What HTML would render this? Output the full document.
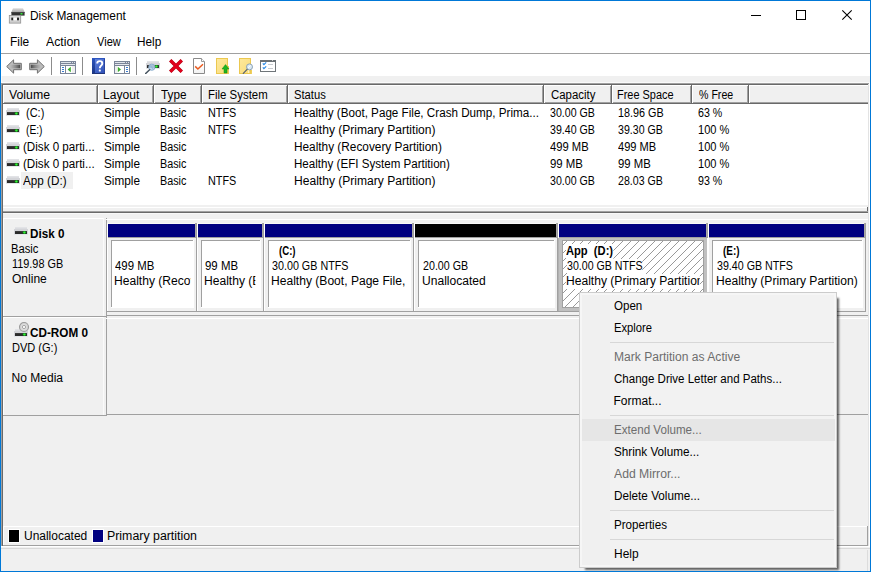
<!DOCTYPE html>
<html lang="en"><head><meta charset="utf-8"><title>Disk Management</title>
<style>
html,body{margin:0;padding:0}
body{width:871px;height:572px;position:relative;overflow:hidden;background:#fff;font:12px/14px 'Liberation Sans', sans-serif;color:#000}
#w{position:absolute;left:0;top:0;width:869px;height:570px;border:1px solid #0078d7;overflow:hidden}
#w>*{position:absolute;margin-left:-1px;margin-top:-1px}
#w svg svg, #w div svg{position:absolute}
.t{white-space:pre;height:14px;transform-origin:0 50%;display:block}
</style></head>
<body><div id="w">
<div style="left:1px;top:53px;width:869px;height:1px;background:#a0a0a0;"></div>
<div style="left:1px;top:76px;width:869px;height:7px;background:#f0f0f0;"></div>
<div style="left:1px;top:82px;width:869px;height:1px;background:#fafafa;"></div>
<div style="left:1px;top:76px;width:1px;height:7px;background:#fafafa;"></div>
<div style="left:1px;top:83px;width:868px;height:1px;background:#a0a0a0;"></div>
<div style="left:1px;top:83px;width:1px;height:463px;background:#a0a0a0;"></div>
<div style="left:2px;top:84px;width:866px;height:1px;background:#696969;"></div>
<div style="left:2px;top:84px;width:1px;height:462px;background:#696969;"></div>
<div style="left:869px;top:83px;width:1px;height:464px;background:#fff;"></div>
<div style="left:868px;top:84px;width:1px;height:462px;background:#e3e3e3;"></div>
<div style="left:3px;top:205px;width:865px;height:2px;background:#f0f0f0;"></div>
<div style="left:3px;top:85px;width:865px;height:19px;background:#f0f0f0;"></div>
<div style="left:3px;top:85px;width:95px;height:1px;background:#fff;"></div>
<div style="left:3px;top:85px;width:1px;height:18px;background:#fff;"></div>
<div style="left:3px;top:103px;width:95px;height:1px;background:#696969;"></div>
<div style="left:4px;top:102px;width:94px;height:1px;background:#a0a0a0;"></div>
<div style="left:97px;top:85px;width:1px;height:19px;background:#696969;"></div>
<div style="left:96px;top:86px;width:1px;height:17px;background:#a0a0a0;"></div>
<div style="left:98px;top:85px;width:56px;height:1px;background:#fff;"></div>
<div style="left:98px;top:85px;width:1px;height:18px;background:#fff;"></div>
<div style="left:98px;top:103px;width:56px;height:1px;background:#696969;"></div>
<div style="left:99px;top:102px;width:55px;height:1px;background:#a0a0a0;"></div>
<div style="left:153px;top:85px;width:1px;height:19px;background:#696969;"></div>
<div style="left:152px;top:86px;width:1px;height:17px;background:#a0a0a0;"></div>
<div style="left:154px;top:85px;width:48px;height:1px;background:#fff;"></div>
<div style="left:154px;top:85px;width:1px;height:18px;background:#fff;"></div>
<div style="left:154px;top:103px;width:48px;height:1px;background:#696969;"></div>
<div style="left:155px;top:102px;width:47px;height:1px;background:#a0a0a0;"></div>
<div style="left:201px;top:85px;width:1px;height:19px;background:#696969;"></div>
<div style="left:200px;top:86px;width:1px;height:17px;background:#a0a0a0;"></div>
<div style="left:202px;top:85px;width:86px;height:1px;background:#fff;"></div>
<div style="left:202px;top:85px;width:1px;height:18px;background:#fff;"></div>
<div style="left:202px;top:103px;width:86px;height:1px;background:#696969;"></div>
<div style="left:203px;top:102px;width:85px;height:1px;background:#a0a0a0;"></div>
<div style="left:287px;top:85px;width:1px;height:19px;background:#696969;"></div>
<div style="left:286px;top:86px;width:1px;height:17px;background:#a0a0a0;"></div>
<div style="left:288px;top:85px;width:256px;height:1px;background:#fff;"></div>
<div style="left:288px;top:85px;width:1px;height:18px;background:#fff;"></div>
<div style="left:288px;top:103px;width:256px;height:1px;background:#696969;"></div>
<div style="left:289px;top:102px;width:255px;height:1px;background:#a0a0a0;"></div>
<div style="left:543px;top:85px;width:1px;height:19px;background:#696969;"></div>
<div style="left:542px;top:86px;width:1px;height:17px;background:#a0a0a0;"></div>
<div style="left:544px;top:85px;width:68px;height:1px;background:#fff;"></div>
<div style="left:544px;top:85px;width:1px;height:18px;background:#fff;"></div>
<div style="left:544px;top:103px;width:68px;height:1px;background:#696969;"></div>
<div style="left:545px;top:102px;width:67px;height:1px;background:#a0a0a0;"></div>
<div style="left:611px;top:85px;width:1px;height:19px;background:#696969;"></div>
<div style="left:610px;top:86px;width:1px;height:17px;background:#a0a0a0;"></div>
<div style="left:612px;top:85px;width:80px;height:1px;background:#fff;"></div>
<div style="left:612px;top:85px;width:1px;height:18px;background:#fff;"></div>
<div style="left:612px;top:103px;width:80px;height:1px;background:#696969;"></div>
<div style="left:613px;top:102px;width:79px;height:1px;background:#a0a0a0;"></div>
<div style="left:691px;top:85px;width:1px;height:19px;background:#696969;"></div>
<div style="left:690px;top:86px;width:1px;height:17px;background:#a0a0a0;"></div>
<div style="left:692px;top:85px;width:57px;height:1px;background:#fff;"></div>
<div style="left:692px;top:85px;width:1px;height:18px;background:#fff;"></div>
<div style="left:692px;top:103px;width:57px;height:1px;background:#696969;"></div>
<div style="left:693px;top:102px;width:56px;height:1px;background:#a0a0a0;"></div>
<div style="left:748px;top:85px;width:1px;height:19px;background:#696969;"></div>
<div style="left:747px;top:86px;width:1px;height:17px;background:#a0a0a0;"></div>
<div style="left:749px;top:85px;width:119px;height:1px;background:#fff;"></div>
<div style="left:749px;top:85px;width:1px;height:18px;background:#fff;"></div>
<div style="left:749px;top:103px;width:119px;height:1px;background:#696969;"></div>
<div style="left:750px;top:102px;width:118px;height:1px;background:#a0a0a0;"></div>
<div style="left:21px;top:172px;width:52px;height:17px;background:#f0f0f0;"></div>
<svg style="left:6px;top:108px" width="14" height="8" viewBox="0 0 14 8"><path d="M1 0 H13 V2 H14 V8 H0 V2 H1 Z" fill="#d3d4d8"/><path d="M1 0 H13 V1 H1 Z" fill="#e2e3e6"/><path d="M1 1 H13 V2 H1 Z" fill="#dbdce0"/><rect x="1" y="4" width="12" height="3" fill="#2b2b2b"/><rect x="1" y="4" width="12" height="1" fill="#3a3a3a"/><rect x="8.6" y="4.2" width="3.6" height="2.6" rx="1" fill="#0f7a12"/><rect x="9.2" y="4.6" width="2.4" height="1.8" rx="0.8" fill="#35f03a"/><rect x="0" y="7" width="14" height="1" fill="#e4e6ea"/></svg>
<svg style="left:6px;top:125px" width="14" height="8" viewBox="0 0 14 8"><path d="M1 0 H13 V2 H14 V8 H0 V2 H1 Z" fill="#d3d4d8"/><path d="M1 0 H13 V1 H1 Z" fill="#e2e3e6"/><path d="M1 1 H13 V2 H1 Z" fill="#dbdce0"/><rect x="1" y="4" width="12" height="3" fill="#2b2b2b"/><rect x="1" y="4" width="12" height="1" fill="#3a3a3a"/><rect x="8.6" y="4.2" width="3.6" height="2.6" rx="1" fill="#0f7a12"/><rect x="9.2" y="4.6" width="2.4" height="1.8" rx="0.8" fill="#35f03a"/><rect x="0" y="7" width="14" height="1" fill="#e4e6ea"/></svg>
<svg style="left:6px;top:142px" width="14" height="8" viewBox="0 0 14 8"><path d="M1 0 H13 V2 H14 V8 H0 V2 H1 Z" fill="#d3d4d8"/><path d="M1 0 H13 V1 H1 Z" fill="#e2e3e6"/><path d="M1 1 H13 V2 H1 Z" fill="#dbdce0"/><rect x="1" y="4" width="12" height="3" fill="#2b2b2b"/><rect x="1" y="4" width="12" height="1" fill="#3a3a3a"/><rect x="8.6" y="4.2" width="3.6" height="2.6" rx="1" fill="#0f7a12"/><rect x="9.2" y="4.6" width="2.4" height="1.8" rx="0.8" fill="#35f03a"/><rect x="0" y="7" width="14" height="1" fill="#e4e6ea"/></svg>
<svg style="left:6px;top:159px" width="14" height="8" viewBox="0 0 14 8"><path d="M1 0 H13 V2 H14 V8 H0 V2 H1 Z" fill="#d3d4d8"/><path d="M1 0 H13 V1 H1 Z" fill="#e2e3e6"/><path d="M1 1 H13 V2 H1 Z" fill="#dbdce0"/><rect x="1" y="4" width="12" height="3" fill="#2b2b2b"/><rect x="1" y="4" width="12" height="1" fill="#3a3a3a"/><rect x="8.6" y="4.2" width="3.6" height="2.6" rx="1" fill="#0f7a12"/><rect x="9.2" y="4.6" width="2.4" height="1.8" rx="0.8" fill="#35f03a"/><rect x="0" y="7" width="14" height="1" fill="#e4e6ea"/></svg>
<svg style="left:6px;top:176px" width="14" height="8" viewBox="0 0 14 8"><path d="M1 0 H13 V2 H14 V8 H0 V2 H1 Z" fill="#d3d4d8"/><path d="M1 0 H13 V1 H1 Z" fill="#e2e3e6"/><path d="M1 1 H13 V2 H1 Z" fill="#dbdce0"/><rect x="1" y="4" width="12" height="3" fill="#2b2b2b"/><rect x="1" y="4" width="12" height="1" fill="#3a3a3a"/><rect x="8.6" y="4.2" width="3.6" height="2.6" rx="1" fill="#0f7a12"/><rect x="9.2" y="4.6" width="2.4" height="1.8" rx="0.8" fill="#35f03a"/><rect x="0" y="7" width="14" height="1" fill="#e4e6ea"/></svg>
<div style="left:3px;top:207px;width:865px;height:1px;background:#fff;"></div>
<div style="left:3px;top:208px;width:865px;height:3px;background:#f0f0f0;"></div>
<div style="left:867px;top:207px;width:1px;height:6px;background:#696969;"></div>
<div style="left:3px;top:211px;width:865px;height:336px;background:#f0f0f0;"></div>
<div style="left:3px;top:211px;width:865px;height:1px;background:#a0a0a0;"></div>
<div style="left:3px;top:212px;width:865px;height:1px;background:#696969;"></div>
<div style="left:3px;top:213px;width:865px;height:1px;background:#f8f8f8;"></div>
<div style="left:3px;top:218px;width:101px;height:1px;background:#fff;"></div>
<div style="left:3px;top:218px;width:1px;height:98px;background:#fff;"></div>
<div style="left:103px;top:218px;width:1px;height:98px;background:#fafafa;"></div>
<div style="left:3px;top:316px;width:103px;height:1px;background:#a0a0a0;"></div>
<div style="left:106px;top:218px;width:1px;height:99px;background:#a0a0a0;"></div>
<div style="left:106px;top:219px;width:762px;height:1px;background:#fff;"></div>
<div style="left:106px;top:315px;width:762px;height:1px;background:#a0a0a0;"></div>
<div style="left:106px;top:311px;width:760px;height:1px;background:#a0a0a0;"></div>
<div style="left:3px;top:317px;width:101px;height:1px;background:#fff;"></div>
<div style="left:3px;top:317px;width:1px;height:98px;background:#fff;"></div>
<div style="left:103px;top:317px;width:1px;height:98px;background:#fafafa;"></div>
<div style="left:3px;top:415px;width:103px;height:1px;background:#a0a0a0;"></div>
<div style="left:106px;top:317px;width:1px;height:99px;background:#a0a0a0;"></div>
<div style="left:106px;top:318px;width:762px;height:1px;background:#fff;"></div>
<div style="left:106px;top:414px;width:762px;height:1px;background:#a0a0a0;"></div>
<div style="left:107px;top:219px;width:761px;height:1px;background:#fff;"></div>
<div style="left:107px;top:223px;width:759px;height:1px;background:#f8f8f8;"></div>
<div style="left:107px;top:223px;width:1px;height:88px;background:#fff;"></div>
<div style="left:196px;top:223px;width:1px;height:88px;background:#a0a0a0;"></div>
<div style="left:195px;top:223px;width:1px;height:15px;background:#a8a8a4;"></div>
<div style="left:108px;top:224px;width:87px;height:13px;background:#000080;"></div>
<div style="left:108px;top:237px;width:88px;height:1px;background:#a0a0a0;"></div>
<div style="left:111px;top:240px;width:82px;height:67px;background:#fff;border-left:1px solid #a0a0a0;border-top:1px solid #a0a0a0;box-sizing:border-box"></div>
<div style="left:193px;top:240px;width:1px;height:68px;background:#fff;"></div>
<div style="left:111px;top:307px;width:83px;height:1px;background:#fff;"></div>
<div style="left:197px;top:223px;width:1px;height:88px;background:#fff;"></div>
<div style="left:263px;top:223px;width:1px;height:88px;background:#a0a0a0;"></div>
<div style="left:262px;top:223px;width:1px;height:15px;background:#a8a8a4;"></div>
<div style="left:198px;top:224px;width:64px;height:13px;background:#000080;"></div>
<div style="left:198px;top:237px;width:65px;height:1px;background:#a0a0a0;"></div>
<div style="left:201px;top:240px;width:59px;height:67px;background:#fff;border-left:1px solid #a0a0a0;border-top:1px solid #a0a0a0;box-sizing:border-box"></div>
<div style="left:260px;top:240px;width:1px;height:68px;background:#fff;"></div>
<div style="left:201px;top:307px;width:60px;height:1px;background:#fff;"></div>
<div style="left:264px;top:223px;width:1px;height:88px;background:#fff;"></div>
<div style="left:413px;top:223px;width:1px;height:88px;background:#a0a0a0;"></div>
<div style="left:412px;top:223px;width:1px;height:15px;background:#a8a8a4;"></div>
<div style="left:265px;top:224px;width:147px;height:13px;background:#000080;"></div>
<div style="left:265px;top:237px;width:148px;height:1px;background:#a0a0a0;"></div>
<div style="left:268px;top:240px;width:142px;height:67px;background:#fff;border-left:1px solid #a0a0a0;border-top:1px solid #a0a0a0;box-sizing:border-box"></div>
<div style="left:410px;top:240px;width:1px;height:68px;background:#fff;"></div>
<div style="left:268px;top:307px;width:143px;height:1px;background:#fff;"></div>
<div style="left:414px;top:223px;width:1px;height:88px;background:#fff;"></div>
<div style="left:557px;top:223px;width:1px;height:88px;background:#a0a0a0;"></div>
<div style="left:556px;top:223px;width:1px;height:15px;background:#a8a8a4;"></div>
<div style="left:415px;top:224px;width:141px;height:13px;background:#000;"></div>
<div style="left:415px;top:237px;width:142px;height:1px;background:#a0a0a0;"></div>
<div style="left:418px;top:240px;width:136px;height:67px;background:#fff;border-left:1px solid #a0a0a0;border-top:1px solid #a0a0a0;box-sizing:border-box"></div>
<div style="left:554px;top:240px;width:1px;height:68px;background:#fff;"></div>
<div style="left:418px;top:307px;width:137px;height:1px;background:#fff;"></div>
<div style="left:558px;top:223px;width:1px;height:88px;background:#fff;"></div>
<div style="left:707px;top:223px;width:1px;height:88px;background:#a0a0a0;"></div>
<div style="left:706px;top:223px;width:1px;height:15px;background:#a8a8a4;"></div>
<div style="left:559px;top:224px;width:147px;height:13px;background:#000080;"></div>
<div style="left:559px;top:237px;width:148px;height:1px;background:#a0a0a0;"></div>
<div style="left:558px;top:238px;width:149px;height:73px;background:#c0c0c0;"></div>
<div style="left:558px;top:238px;width:1px;height:73px;background:#b0b0b0;"></div>
<div style="left:707px;top:238px;width:1px;height:73px;background:#fff;"></div>
<div style="left:562px;top:240px;width:142px;height:68px;background:#a0a0a0;"></div>
<svg style="left:563px;top:241px" width="140" height="66"><defs><pattern id="hp" width="8" height="8" patternUnits="userSpaceOnUse" patternTransform="translate(4,0)"><path d="M-1 9 L9 -1 M-1 1 L1 -1 M7 9 L9 7" stroke="#999" stroke-width="1" fill="none" shape-rendering="crispEdges"/></pattern></defs><rect width="100%" height="100%" fill="#fff"/><rect width="100%" height="100%" fill="url(#hp)"/></svg>
<div style="left:708px;top:223px;width:1px;height:88px;background:#fff;"></div>
<div style="left:865px;top:223px;width:1px;height:88px;background:#a0a0a0;"></div>
<div style="left:864px;top:223px;width:1px;height:15px;background:#a8a8a4;"></div>
<div style="left:709px;top:224px;width:155px;height:13px;background:#000080;"></div>
<div style="left:709px;top:237px;width:156px;height:1px;background:#a0a0a0;"></div>
<div style="left:712px;top:240px;width:150px;height:67px;background:#fff;border-left:1px solid #a0a0a0;border-top:1px solid #a0a0a0;box-sizing:border-box"></div>
<div style="left:862px;top:240px;width:1px;height:68px;background:#fff;"></div>
<div style="left:712px;top:307px;width:151px;height:1px;background:#fff;"></div>
<svg style="left:14px;top:227px" width="14" height="8" viewBox="0 0 14 8"><path d="M1 0 H13 V2 H14 V8 H0 V2 H1 Z" fill="#d3d4d8"/><path d="M1 0 H13 V1 H1 Z" fill="#e2e3e6"/><path d="M1 1 H13 V2 H1 Z" fill="#dbdce0"/><rect x="1" y="4" width="12" height="3" fill="#2b2b2b"/><rect x="1" y="4" width="12" height="1" fill="#3a3a3a"/><rect x="8.6" y="4.2" width="3.6" height="2.6" rx="1" fill="#0f7a12"/><rect x="9.2" y="4.6" width="2.4" height="1.8" rx="0.8" fill="#35f03a"/><rect x="0" y="7" width="14" height="1" fill="#e4e6ea"/></svg>
<svg style="left:14px;top:321px" width="16" height="16" viewBox="0 0 16 16"><g transform="translate(0,8)"><path d="M1 0 H13 V2 H14 V8 H0 V2 H1 Z" fill="#d3d4d8"/><path d="M1 0 H13 V1 H1 Z" fill="#e2e3e6"/><path d="M1 1 H13 V2 H1 Z" fill="#dbdce0"/><rect x="1" y="4" width="12" height="3" fill="#2b2b2b"/><rect x="1" y="4" width="12" height="1" fill="#3a3a3a"/><rect x="8.6" y="4.2" width="3.6" height="2.6" rx="1" fill="#0f7a12"/><rect x="9.2" y="4.6" width="2.4" height="1.8" rx="0.8" fill="#35f03a"/><rect x="0" y="7" width="14" height="1" fill="#e4e6ea"/></g><circle cx="10" cy="6" r="4.5" fill="#d6d6d6" stroke="#9c9c9c" stroke-width="1.1"/><circle cx="10" cy="6" r="3" fill="#dedede"/><circle cx="10" cy="6" r="1.6" fill="#fff" stroke="#9f9f9f" stroke-width="0.9"/></svg>
<div style="left:3px;top:526px;width:865px;height:1px;background:#fff;"></div>
<div style="left:3px;top:526px;width:1px;height:19px;background:#fff;"></div>
<div style="left:867px;top:526px;width:1px;height:20px;background:#a0a0a0;"></div>
<div style="left:3px;top:545px;width:865px;height:1px;background:#a0a0a0;"></div>
<div style="left:3px;top:546px;width:867px;height:1px;background:#fff;"></div>
<div style="left:8px;top:529px;width:12px;height:14px;background:#fff;"></div>
<div style="left:9px;top:530px;width:10px;height:12px;background:#000;"></div>
<div style="left:92px;top:529px;width:12px;height:14px;background:#fff;"></div>
<div style="left:93px;top:530px;width:10px;height:12px;background:#000080;"></div>
<div style="left:1px;top:547px;width:869px;height:24px;background:#f0f0f0;"></div>
<div style="left:1px;top:548px;width:869px;height:1px;background:#d9d9d9;"></div>
<div style="left:867px;top:550px;width:1px;height:21px;background:#dcdcdc;"></div>
<svg style="left:8px;top:7px" width="18" height="17" viewBox="0 0 18 17"><defs><linearGradient id="gt" x1="0" y1="0" x2="0" y2="1"><stop offset="0" stop-color="#dcdcdc"/><stop offset="1" stop-color="#a9a9a9"/></linearGradient></defs><path d="M5 1.3 H15 L16.6 5 H3.4 Z" fill="url(#gt)"/><rect x="3.4" y="5" width="13.2" height="3.6" fill="#333"/><rect x="3.4" y="5" width="13.2" height="0.8" fill="#4a4a4a"/><rect x="12.4" y="5.9" width="2.2" height="1.7" rx="0.6" fill="#31ea35"/><rect x="1.3" y="8.5" width="11.4" height="7.6" fill="#d9d9d9" stroke="#8f8f8f" stroke-width="0.8"/><rect x="2" y="14.6" width="10" height="1" fill="#bdbdbd"/><rect x="3.3" y="10.6" width="2" height="2.7" fill="#262626"/><rect x="9" y="10.6" width="2" height="2.7" fill="#262626"/><rect x="5.5" y="10.8" width="3.3" height="2.3" fill="#fff"/></svg>
<svg style="left:740px;top:1px" width="130" height="30" viewBox="0 0 130 30"><path d="M11 14.5 H21" stroke="#000" stroke-width="1" fill="none"/><rect x="56.5" y="9.5" width="9" height="9" stroke="#000" stroke-width="1" fill="none"/><path d="M102.3 9.3 L111.7 18.7 M111.7 9.3 L102.3 18.7" stroke="#000" stroke-width="1.1" fill="none"/></svg>
<svg style="left:6px;top:59px" width="16" height="15" viewBox="0 0 16 15"><defs><linearGradient id="ga" x1="0" y1="0" x2="1" y2="0"><stop offset="0" stop-color="#9a9a9a" stop-opacity="0"/><stop offset="0.35" stop-color="#8a8a8a" stop-opacity="0.6"/><stop offset="1" stop-color="#474747"/></linearGradient><linearGradient id="gb" x1="1" y1="0" x2="0" y2="0"><stop offset="0" stop-color="#9a9a9a" stop-opacity="0"/><stop offset="0.35" stop-color="#8a8a8a" stop-opacity="0.6"/><stop offset="1" stop-color="#474747"/></linearGradient></defs><path d="M0.7 7.5 L7.6 0.8 V4.3 H15.3 V10.7 H7.6 V14.2 Z" fill="#bcbcbc" stroke="#707070" stroke-width="1" stroke-linejoin="round"/><rect x="4" y="5.7" width="10.2" height="3.6" fill="url(#ga)"/></svg>
<svg style="left:29px;top:59px" width="16" height="15" viewBox="0 0 16 15"><path d="M15.3 7.5 L8.4 0.8 V4.3 H0.7 V10.7 H8.4 V14.2 Z" fill="#bcbcbc" stroke="#707070" stroke-width="1" stroke-linejoin="round"/><rect x="1.8" y="5.7" width="10.2" height="3.6" fill="url(#gb)"/></svg>
<svg style="left:60px;top:61px" width="16" height="13" viewBox="0 0 16 13"><rect x="0.5" y="0.5" width="15" height="12" fill="#fff" stroke="#7b8598" stroke-width="1"/><rect x="1" y="1" width="14" height="1" fill="#dfe3ea"/><rect x="1" y="2" width="14" height="1" fill="#7b8598"/><rect x="1" y="3" width="14" height="1" fill="#e3e6ec"/><rect x="1" y="4" width="14" height="1" fill="#7b8598"/><rect x="11" y="1" width="1" height="1" fill="#7b8598"/><rect x="13" y="1" width="1" height="1" fill="#7b8598"/><rect x="5" y="5" width="1" height="7" fill="#7b8598"/><rect x="12" y="5" width="3" height="7" fill="#efefef"/><path d="M2 6.5 H4 M2 8.5 H4 M2 10.5 H4" stroke="#3a7bd0" stroke-width="1"/><path d="M10.8 5.8 V11.2 L7.6 8.5 Z" fill="#3cab2e"/></svg>
<svg style="left:92px;top:58px" width="13" height="16" viewBox="0 0 13 16"><defs><linearGradient id="gh" x1="0" y1="0" x2="0.6" y2="1"><stop offset="0" stop-color="#6689e2"/><stop offset="1" stop-color="#3355bb"/></linearGradient><linearGradient id="gh2" x1="0" y1="0" x2="0" y2="1"><stop offset="0" stop-color="#2b55bf"/><stop offset="1" stop-color="#1b3584"/></linearGradient></defs><rect x="0" y="0" width="13" height="16" fill="url(#gh)"/><rect x="0" y="0" width="3" height="16" fill="url(#gh2)"/><rect x="12" y="0" width="1" height="16" fill="#2a449c"/><rect x="0" y="15" width="13" height="1" fill="#1f3478"/><rect x="0" y="0" width="13" height="1" fill="#2f56c0"/><path d="M5.2 5.4 C5.2 2.3 10.3 2.3 10.3 5.4 C10.3 7.6 7.8 7.8 7.8 10.2" stroke="#fff" stroke-width="1.9" fill="none"/><rect x="6.8" y="11.6" width="2" height="2" rx="0.6" fill="#fff"/></svg>
<svg style="left:114px;top:61px" width="16" height="13" viewBox="0 0 16 13"><rect x="0.5" y="0.5" width="15" height="12" fill="#fff" stroke="#7b8598" stroke-width="1"/><rect x="1" y="1" width="14" height="1" fill="#dfe3ea"/><rect x="1" y="2" width="14" height="1" fill="#7b8598"/><rect x="1" y="3" width="14" height="1" fill="#e3e6ec"/><rect x="1" y="4" width="14" height="1" fill="#7b8598"/><rect x="11" y="1" width="1" height="1" fill="#7b8598"/><rect x="13" y="1" width="1" height="1" fill="#7b8598"/><rect x="10" y="5" width="1" height="7" fill="#7b8598"/><rect x="1" y="5" width="2" height="7" fill="#efefef"/><path d="M12 6.5 H14 M12 8.5 H14 M12 10.5 H14" stroke="#3a7bd0" stroke-width="1"/><path d="M3.8 5.8 V11.2 L7 8.5 Z" fill="#3cab2e"/></svg>
<svg style="left:145px;top:61px" width="16" height="13" viewBox="0 0 16 13"><g transform="translate(1,0)"><path d="M1 0 H13 V2 H14 V8 H0 V2 H1 Z" fill="#d3d4d8"/><path d="M1 0 H13 V1 H1 Z" fill="#e2e3e6"/><path d="M1 1 H13 V2 H1 Z" fill="#dbdce0"/><rect x="1" y="4" width="12" height="3" fill="#2b2b2b"/><rect x="1" y="4" width="12" height="1" fill="#3a3a3a"/><rect x="8.6" y="4.2" width="3.6" height="2.6" rx="1" fill="#0f7a12"/><rect x="9.2" y="4.6" width="2.4" height="1.8" rx="0.8" fill="#35f03a"/><rect x="0" y="7" width="14" height="1" fill="#e4e6ea"/></g><circle cx="6.8" cy="6.2" r="3.1" fill="#b9d3ea" fill-opacity="0.88" stroke="#86a9cb" stroke-width="0.9"/><path d="M5.4 4.6 L8 7.6" stroke="#8fb6dc" stroke-width="1.2"/><path d="M4.6 8.8 L0.6 12.6" stroke="#44525e" stroke-width="1.4" stroke-linecap="round"/></svg>
<svg style="left:169px;top:59px" width="14" height="14" viewBox="0 0 14 14"><path d="M1.2 1.2 L12.8 12.8 M12.8 1.2 L1.2 12.8" stroke="#b30518" stroke-width="3.4" fill="none"/><path d="M1.4 1.4 L12.6 12.6 M12.6 1.4 L1.4 12.6" stroke="#e2001c" stroke-width="2.4" fill="none"/></svg>
<svg style="left:193px;top:58px" width="12" height="16" viewBox="0 0 12 16"><defs><linearGradient id="gd" x1="0" y1="0" x2="0" y2="1"><stop offset="0.4" stop-color="#fff"/><stop offset="1" stop-color="#f1f1f1"/></linearGradient></defs><path d="M0.5 0.5 H8.5 L11.5 3.5 V15.5 H0.5 Z" fill="url(#gd)" stroke="#8a8a8a" stroke-width="1"/><path d="M8.5 0.5 V3.5 H11.5" fill="#fff" stroke="#9a9a9a" stroke-width="1"/><path d="M2.2 8.4 L4.9 11 L10 6.2" stroke="#ea5a1e" stroke-width="1.5" fill="none"/></svg>
<svg style="left:216px;top:58px" width="14" height="16" viewBox="0 0 14 16"><defs><linearGradient id="gf" x1="0" y1="0" x2="1" y2="1"><stop offset="0" stop-color="#fee99e"/><stop offset="1" stop-color="#f9db78"/></linearGradient></defs><rect x="0.5" y="0.5" width="11" height="15" fill="url(#gf)" stroke="#ebc850" stroke-width="1"/><rect x="12" y="8" width="1" height="8" fill="#efcf5e"/><path d="M9.5 6.6 L13 11 H11 V15 H8 V11 H6 Z" fill="#1db521" stroke="#128f17" stroke-width="0.5"/></svg>
<svg style="left:239px;top:58px" width="14" height="16" viewBox="0 0 14 16"><defs><linearGradient id="gf2" x1="0" y1="0" x2="1" y2="1"><stop offset="0" stop-color="#fee99e"/><stop offset="1" stop-color="#f9db78"/></linearGradient></defs><rect x="0.5" y="0.5" width="11" height="15" fill="url(#gf2)" stroke="#ebc850" stroke-width="1"/><rect x="12" y="12" width="1" height="4" fill="#efcf5e"/><rect x="9" y="12" width="1" height="3" fill="#fff2c0"/><circle cx="10.5" cy="8.9" r="3" fill="#d9e9f4" stroke="#8da3b6" stroke-width="1"/><path d="M9.2 9.8 L11.6 7.6" stroke="#fff" stroke-width="1"/><path d="M8.1 11.4 L4.3 15.4" stroke="#56636f" stroke-width="1.2" stroke-linecap="round"/></svg>
<svg style="left:260px;top:60px" width="16" height="12" viewBox="0 0 16 12"><rect x="0.5" y="0.5" width="15" height="11" fill="#fff" stroke="#6f7579" stroke-width="1"/><rect x="0" y="0" width="16" height="2" fill="#6a7074"/><rect x="12" y="0" width="1" height="1" fill="#d0d0d0"/><path d="M2.8 3.4 L3.9 4.6 L6.2 2.4 M2.8 7.4 L3.9 8.6 L6.2 6.4" stroke="#2a8ae6" stroke-width="1.2" fill="none"/><path d="M8 4.5 H13 M8 8.5 H13" stroke="#c6cacf" stroke-width="1"/></svg>
<div style="left:51px;top:57px;width:1px;height:18px;background:#8c8c8c;"></div>
<div style="left:82px;top:57px;width:1px;height:18px;background:#8c8c8c;"></div>
<div style="left:136px;top:57px;width:1px;height:18px;background:#8c8c8c;"></div>
<span class="t" style="left:29.62px;top:9px;transform:scaleX(0.9905);">Disk Management</span>
<span class="t" style="left:10.12px;top:35px;transform:scaleX(0.9937);">File</span>
<span class="t" style="left:45.74px;top:35px;transform:scaleX(1.023);">Action</span>
<span class="t" style="left:96.74px;top:35px;transform:scaleX(0.9217);">View</span>
<span class="t" style="left:136.63px;top:35px;transform:scaleX(0.9828);">Help</span>
<span class="t" style="left:9.04px;top:88px;transform:scaleX(1.024);">Volume</span>
<span class="t" style="left:103.31px;top:88px;transform:scaleX(1.0082);">Layout</span>
<span class="t" style="left:160.53px;top:88px;transform:scaleX(0.9794);">Type</span>
<span class="t" style="left:207.56px;top:88px;transform:scaleX(0.9523);">File System</span>
<span class="t" style="left:293.55px;top:88px;transform:scaleX(0.9367);">Status</span>
<span class="t" style="left:550.7px;top:88px;transform:scaleX(0.951);">Capacity</span>
<span class="t" style="left:617.19px;top:88px;transform:scaleX(0.9114);">Free Space</span>
<span class="t" style="left:698.51px;top:88px;transform:scaleX(0.8844);">% Free</span>
<span class="t" style="left:26.1px;top:106px;transform:scaleX(0.9152);">(C:)</span>
<span class="t" style="left:103.62px;top:106px;transform:scaleX(0.9807);">Simple</span>
<span class="t" style="left:159.9px;top:106px;transform:scaleX(0.8999);">Basic</span>
<span class="t" style="left:208.0px;top:106px;transform:scaleX(0.8999);">NTFS</span>
<span class="t" style="left:293.74px;top:106px;transform:scaleX(0.9716);">Healthy (Boot, Page File, Crash Dump, Prima...</span>
<span class="t" style="left:550.1px;top:106px;transform:scaleX(0.884);">30.00 GB</span>
<span class="t" style="left:617.53px;top:106px;transform:scaleX(0.8993);">18.96 GB</span>
<span class="t" style="left:698.3px;top:106px;transform:scaleX(0.8889);">63 %</span>
<span class="t" style="left:26.14px;top:123px;transform:scaleX(0.8557);">(E:)</span>
<span class="t" style="left:103.62px;top:123px;transform:scaleX(0.9807);">Simple</span>
<span class="t" style="left:159.9px;top:123px;transform:scaleX(0.8999);">Basic</span>
<span class="t" style="left:208.0px;top:123px;transform:scaleX(0.8999);">NTFS</span>
<span class="t" style="left:293.71px;top:123px;transform:scaleX(1.0057);">Healthy (Primary Partition)</span>
<span class="t" style="left:550.1px;top:123px;transform:scaleX(0.884);">39.40 GB</span>
<span class="t" style="left:618.3px;top:123px;transform:scaleX(0.884);">39.30 GB</span>
<span class="t" style="left:697.51px;top:123px;transform:scaleX(0.9231);">100 %</span>
<span class="t" style="left:22.86px;top:140px;transform:scaleX(0.9677);">(Disk 0 parti...</span>
<span class="t" style="left:103.62px;top:140px;transform:scaleX(0.9807);">Simple</span>
<span class="t" style="left:159.9px;top:140px;transform:scaleX(0.8999);">Basic</span>
<span class="t" style="left:293.73px;top:140px;transform:scaleX(0.9852);">Healthy (Recovery Partition)</span>
<span class="t" style="left:550.13px;top:140px;transform:scaleX(0.9359);">499 MB</span>
<span class="t" style="left:618.33px;top:140px;transform:scaleX(0.9237);">499 MB</span>
<span class="t" style="left:697.51px;top:140px;transform:scaleX(0.9231);">100 %</span>
<span class="t" style="left:22.86px;top:157px;transform:scaleX(0.9677);">(Disk 0 parti...</span>
<span class="t" style="left:103.62px;top:157px;transform:scaleX(0.9807);">Simple</span>
<span class="t" style="left:159.9px;top:157px;transform:scaleX(0.8999);">Basic</span>
<span class="t" style="left:293.74px;top:157px;transform:scaleX(0.9662);">Healthy (EFI System Partition)</span>
<span class="t" style="left:550.1px;top:157px;transform:scaleX(0.9499);">99 MB</span>
<span class="t" style="left:618.3px;top:157px;transform:scaleX(0.944);">99 MB</span>
<span class="t" style="left:697.51px;top:157px;transform:scaleX(0.9231);">100 %</span>
<span class="t" style="left:23.34px;top:174px;transform:scaleX(0.9741);">App (D:)</span>
<span class="t" style="left:103.62px;top:174px;transform:scaleX(0.9807);">Simple</span>
<span class="t" style="left:159.9px;top:174px;transform:scaleX(0.8999);">Basic</span>
<span class="t" style="left:208.0px;top:174px;transform:scaleX(0.8999);">NTFS</span>
<span class="t" style="left:293.71px;top:174px;transform:scaleX(1.0057);">Healthy (Primary Partition)</span>
<span class="t" style="left:550.1px;top:174px;transform:scaleX(0.884);">30.00 GB</span>
<span class="t" style="left:618.3px;top:174px;transform:scaleX(0.8839);">28.03 GB</span>
<span class="t" style="left:698.3px;top:174px;transform:scaleX(0.8888);">93 %</span>
<span class="t" style="left:29.75px;top:227px;font-weight:bold;transform:scaleX(0.9728);">Disk 0</span>
<span class="t" style="left:11.37px;top:242px;transform:scaleX(0.9355);">Basic</span>
<span class="t" style="left:11.73px;top:257px;transform:scaleX(0.9066);">119.98 GB</span>
<span class="t" style="left:11.9px;top:272px;transform:scaleX(1.0027);">Online</span>
<span class="t" style="left:30.3px;top:326px;font-weight:bold;transform:scaleX(0.9779);">CD-ROM 0</span>
<span class="t" style="left:11.69px;top:341px;transform:scaleX(0.9187);">DVD (G:)</span>
<span class="t" style="left:11.61px;top:371px;">No Media</span>
<span class="t" style="left:115.03px;top:259px;transform:scaleX(0.9505);">499 MB</span>
<span class="t" style="left:114.11px;top:274px;transform:scaleX(1.0064);width:75.71px;overflow:hidden;">Healthy (Recovery Partition)</span>
<span class="t" style="left:205.3px;top:259px;transform:scaleX(0.9528);">99 MB</span>
<span class="t" style="left:204.41px;top:274px;transform:scaleX(1.0064);width:51.26px;overflow:hidden;">Healthy (EFI System Partition)</span>
<span class="t" style="left:278.6px;top:244px;font-weight:bold;transform:scaleX(0.7999);">(C:)</span>
<span class="t" style="left:272.1px;top:259px;transform:scaleX(0.8953);">30.00 GB NTFS</span>
<span class="t" style="left:271.21px;top:274px;transform:scaleX(1.0064);width:133.93px;overflow:hidden;">Healthy (Boot, Page File, Crash Dump, Primary Partition)</span>
<span class="t" style="left:422.5px;top:259px;transform:scaleX(0.8899);">20.00 GB</span>
<span class="t" style="left:421.64px;top:274px;transform:scaleX(1.0056);">Unallocated</span>
<span class="t" style="left:566.11px;top:244px;font-weight:bold;transform:scaleX(0.9293);background:#fff;height:15px;">App  (D:)</span>
<span class="t" style="left:566.6px;top:259px;transform:scaleX(0.8847);background:#fff;height:15px;">30.00 GB NTFS</span>
<span class="t" style="left:565.71px;top:274px;transform:scaleX(1.0064);width:133.44px;overflow:hidden;background:#fff;height:15px;">Healthy (Primary Partition)</span>
<span class="t" style="left:722.5px;top:244px;font-weight:bold;transform:scaleX(0.8248);">(E:)</span>
<span class="t" style="left:716.6px;top:259px;transform:scaleX(0.8894);">39.40 GB NTFS</span>
<span class="t" style="left:715.71px;top:274px;transform:scaleX(1.0071);">Healthy (Primary Partition)</span>
<span class="t" style="left:23.65px;top:529px;transform:scaleX(0.9976);">Unallocated</span>
<span class="t" style="left:107.09px;top:529px;transform:scaleX(1.03);">Primary partition</span>
<div style="left:579px;top:292px;width:258px;height:276px;box-sizing:border-box;background:#f2f2f2;border:1px solid #ccc;box-shadow:4px 4px 2px -2px rgba(0,0,0,0.6)"></div>
<div style="left:580px;top:293px;width:256px;height:274px;background:#f6f6f6;"></div>
<div style="left:582px;top:295px;width:252px;height:270px;background:#f2f2f2;"></div>
<div style="left:582px;top:295px;width:28px;height:270px;background:#f0f0f0;"></div>
<div style="left:582px;top:419px;width:253px;height:22px;background:#e6e6e6;"></div>
<div style="left:610px;top:342px;width:224px;height:1px;background:#d7d7d7;"></div>
<div style="left:610px;top:415px;width:224px;height:1px;background:#d7d7d7;"></div>
<div style="left:610px;top:510px;width:224px;height:1px;background:#d7d7d7;"></div>
<div style="left:610px;top:539px;width:224px;height:1px;background:#d7d7d7;"></div>
<span class="t" style="left:614.4px;top:299px;transform:scaleX(0.9619);">Open</span>
<span class="t" style="left:613.57px;top:321px;transform:scaleX(0.9348);">Explore</span>
<span class="t" style="left:613.51px;top:350px;color:#6d6d6d;transform:scaleX(1.0063);">Mark Partition as Active</span>
<span class="t" style="left:614.4px;top:372px;transform:scaleX(0.9603);">Change Drive Letter and Paths...</span>
<span class="t" style="left:613.51px;top:394px;">Format...</span>
<span class="t" style="left:613.54px;top:423px;color:#6d6d6d;transform:scaleX(0.9673);">Extend Volume...</span>
<span class="t" style="left:613.62px;top:445px;transform:scaleX(0.9756);">Shrink Volume...</span>
<span class="t" style="left:614.44px;top:467px;color:#6d6d6d;transform:scaleX(1.0178);">Add Mirror...</span>
<span class="t" style="left:613.53px;top:489px;transform:scaleX(0.9766);">Delete Volume...</span>
<span class="t" style="left:613.54px;top:518px;transform:scaleX(0.9683);">Properties</span>
<span class="t" style="left:613.52px;top:547px;transform:scaleX(0.9953);">Help</span>
</div></body></html>
